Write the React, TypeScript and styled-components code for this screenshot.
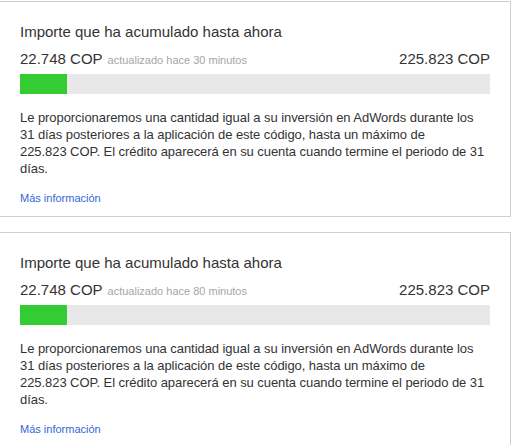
import React from 'react';
import styled, { createGlobalStyle } from 'styled-components';

const GlobalStyle = createGlobalStyle`
  html, body {
    margin: 0;
    padding: 0;
    background: #fff;
  }
  body {
    font-family: Arial, "Liberation Sans", sans-serif;
    color: #333;
  }
`;

const Page = styled.div`
  padding-top: 1px;
  display: flex;
  flex-direction: column;
  gap: 15px;
`;

const Card = styled.section`
  box-sizing: border-box;
  width: 512px;
  margin-left: -1px;
  border: 1px solid #d0d0d0;
  background: #fff;
  padding: 20px 20px 10px 20px;
  display: flex;
  flex-direction: column;
`;

const Title = styled.h3`
  margin: 0;
  font-size: 15px;
  font-weight: normal;
  line-height: 20px;
  color: #333;
`;

const AmountRow = styled.div`
  display: flex;
  justify-content: space-between;
  align-items: baseline;
  margin-top: 7px;
  line-height: 20px;
`;

const Amount = styled.span`
  font-size: 15px;
  color: #333;
`;

const Updated = styled.span`
  font-size: 11px;
  color: #a6a6a6;
  margin-left: 5px;
`;

const Track = styled.div`
  margin-top: 4px;
  height: 20px;
  background: #e8e8e8;
`;

const Fill = styled.div`
  height: 100%;
  background: #33cc33;
`;

const Body = styled.p`
  margin: 15px 0 0;
  font-size: 13px;
  letter-spacing: -0.06px;
  line-height: 17px;
  color: #333;
`;

const MoreLink = styled.a`
  margin-top: 14px;
  font-size: 11px;
  line-height: 15px;
  color: #3367d6;
  text-decoration: none;
  align-self: flex-start;
`;

type CreditCardProps = {
  current: string;
  updated: string;
  total: string;
  percent: number;
};

const CreditCard = ({ current, updated, total, percent }: CreditCardProps) => (
  <Card>
    <Title>Importe que ha acumulado hasta ahora</Title>
    <AmountRow>
      <div>
        <Amount>{current}</Amount>
        <Updated>{updated}</Updated>
      </div>
      <Amount>{total}</Amount>
    </AmountRow>
    <Track>
      <Fill style={{ width: `${percent}%` }} />
    </Track>
    <Body>
      Le proporcionaremos una cantidad igual a su inversión en AdWords durante los 31 días
      posteriores a la aplicación de este código, hasta un máximo de {total}. El crédito
      aparecerá en su cuenta cuando termine el periodo de 31 días.
    </Body>
    <MoreLink href="#">Más información</MoreLink>
  </Card>
);

const App = () => (
  <>
    <GlobalStyle />
    <Page>
      <CreditCard
        current={'22.748\u00a0COP'}
        updated="actualizado hace 30 minutos"
        total={'225.823\u00a0COP'}
        percent={10}
      />
      <CreditCard
        current={'22.748\u00a0COP'}
        updated="actualizado hace 80 minutos"
        total={'225.823\u00a0COP'}
        percent={10}
      />
    </Page>
  </>
);

export default App;
